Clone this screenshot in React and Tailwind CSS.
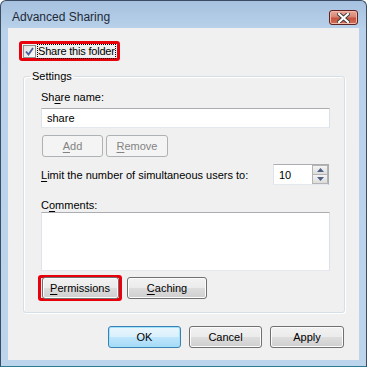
import React from "react";

const font = { fontFamily: '"Segoe UI", "Liberation Sans", Arial, sans-serif' };

function Btn({ children, w, disabled, def, className = "" }) {
  let cls =
    "flex items-center justify-center h-[22px] rounded-[3px] border text-[11px] leading-[14px] whitespace-nowrap ";
  if (disabled) {
    cls += "border-[#adb2b5] bg-[#f4f4f4] text-[#838383] ";
  } else if (def) {
    cls +=
      "border-[#3c7fb1] bg-[linear-gradient(#eaf6fd_0%,#d9f0fc_50%,#bee6fd_51%,#a7d9f5_100%)] text-black shadow-[inset_0_0_0_1px_#9ee3fb] ";
  } else {
    cls +=
      "border-[#707070] bg-[linear-gradient(#f2f2f2_0%,#ebebeb_50%,#dddddd_51%,#cfcfcf_100%)] text-black shadow-[inset_0_0_0_1px_#fcfcfc] ";
  }
  return <div className={cls + w + " " + className}>{children}</div>;
}

function U({ children }) {
  return <span className="underline underline-offset-[2px]">{children}</span>;
}

export default function App() {
  return (
    <div className="w-[367px] h-[368px] bg-white" style={font}>
      <div className="w-[367px] h-[367px] border border-[#3b4d63] border-b-[#2c7a94] rounded-t-[6px] flex flex-col bg-[linear-gradient(#a6c1df_0px,#b9d1ea_28px,#bcd4ec_100%)]">
        {/* Title bar */}
        <div className="h-[27px] flex items-start shrink-0">
          <div className="ml-[11px] mt-[9px] text-[12px] leading-[14px] text-[#1e2a38] whitespace-nowrap">
            Advanced Sharing
          </div>
          <div className="ml-auto mr-[8px] mt-[9px] w-[29px] h-[15px] rounded-[3px] border border-[#5d2222] bg-[linear-gradient(#e9a99a_0%,#d98573_45%,#c4533f_55%,#d66f55_100%)] flex items-center justify-center shadow-[inset_0_0_0_1px_#f1b8aa]">
            <svg width="13" height="10" viewBox="0 0 13 10">
              <path d="M2 1 L11 9 M11 1 L2 9" stroke="#3a3a3a" strokeWidth="4" strokeLinecap="square" />
              <path d="M2 1 L11 9 M11 1 L2 9" stroke="#ffffff" strokeWidth="2.2" strokeLinecap="square" />
            </svg>
          </div>
        </div>
        {/* Client area */}
        <div className="mx-[7px] h-[332px] bg-[#f0f0f0] flex flex-col text-[11px] leading-[14px] text-black">
          {/* Share this folder */}
          <div className="ml-[11px] mt-[13px] w-[101px] h-[20px] rounded-[3px] border-[3px] border-[#e8000b] flex items-center">
            <div className="ml-[1px] shrink-0 w-[13px] h-[13px] border border-[#8e8f8f] bg-[linear-gradient(135deg,#e0e0e0,#fbfbfb)] flex items-center justify-center">
              <svg width="9" height="9" viewBox="0 0 9 9">
                <path d="M1 4.5 L3.5 7.5 L8 1" stroke="#4a5f97" strokeWidth="1.8" fill="none" />
              </svg>
            </div>
            <div className="ml-[1px] h-[15px] leading-[13px] border border-dotted border-black whitespace-nowrap tracking-[-0.2px]">
              Share this folder
            </div>
          </div>
          {/* Settings groupbox */}
          <fieldset className="ml-[15px] mt-[8px] w-[321px] h-[244px] border border-[#d5dfe5] rounded-[3px] p-0 m-0 shadow-[inset_1px_1px_0_#ffffff,1px_1px_0_#ffffff]">
            <legend className="ml-[6px] px-[2px] leading-[14px]">Settings</legend>
            <div className="flex flex-col pl-[17px] pr-[14px] pt-[7px]">
              <div>
                Sh<U>a</U>re name:
              </div>
              <div className="mt-[4px] w-[289px] h-[20px] border border-[#abadb3] border-l-[#e2e3ea] border-r-[#dbdfe6] border-b-[#e3e9ef] bg-white flex items-center pl-[5px]">
                share
              </div>
              <div className="mt-[7px] flex gap-[3px] ml-[1px]">
                <Btn w="w-[61px]" disabled>
                  <U>A</U>dd
                </Btn>
                <Btn w="w-[62px]" disabled>
                  <U>R</U>emove
                </Btn>
              </div>
              <div className="mt-[7px] flex items-center h-[21px]">
                <div className="whitespace-nowrap">
                  <U>L</U>imit the number of simultaneous users to:
                </div>
                <div className="ml-auto mr-[1px] w-[56px] h-[21px] border border-[#abadb3] border-l-[#e2e3ea] border-b-[#e3e9ef] bg-white flex">
                  <div className="flex-1 pl-[5px] flex items-center">10</div>
                  <div className="w-[16px] flex flex-col">
                    <div className="flex-1 border border-[#b4b4b4] bg-[linear-gradient(#f4f4f4,#dcdcdc)] flex items-center justify-center">
                      <svg width="7" height="4" viewBox="0 0 7 4">
                        <path d="M0 4 L3.5 0 L7 4 Z" fill="#4d6185" />
                      </svg>
                    </div>
                    <div className="flex-1 border border-t-0 border-[#b4b4b4] bg-[linear-gradient(#f4f4f4,#dcdcdc)] flex items-center justify-center">
                      <svg width="7" height="4" viewBox="0 0 7 4">
                        <path d="M0 0 L3.5 4 L7 0 Z" fill="#4d6185" />
                      </svg>
                    </div>
                  </div>
                </div>
              </div>
              <div className="mt-[13px]">
                C<U>o</U>mments:
              </div>
              <div className="w-[289px] h-[59px] border border-[#abadb3] border-l-[#e2e3ea] border-r-[#dbdfe6] border-b-[#e3e9ef] bg-white" />
              <div className="mt-[4px] flex items-center ml-[-3px]">
                <div className="w-[84px] h-[26px] rounded-[3px] border-[3px] border-[#e8000b] flex items-center justify-center">
                  <Btn w="w-[77px]">
                    <U>P</U>ermissions
                  </Btn>
                </div>
                <Btn w="w-[80px]" className="ml-[5px]">
                  <U>C</U>aching
                </Btn>
              </div>
            </div>
          </fieldset>
          {/* Bottom buttons */}
          <div className="mt-[13px] flex gap-[8px] ml-[100px]">
            <Btn w="w-[73px]" def>
              OK
            </Btn>
            <Btn w="w-[73px]">Cancel</Btn>
            <Btn w="w-[74px]">Apply</Btn>
          </div>
        </div>
      </div>
    </div>
  );
}
